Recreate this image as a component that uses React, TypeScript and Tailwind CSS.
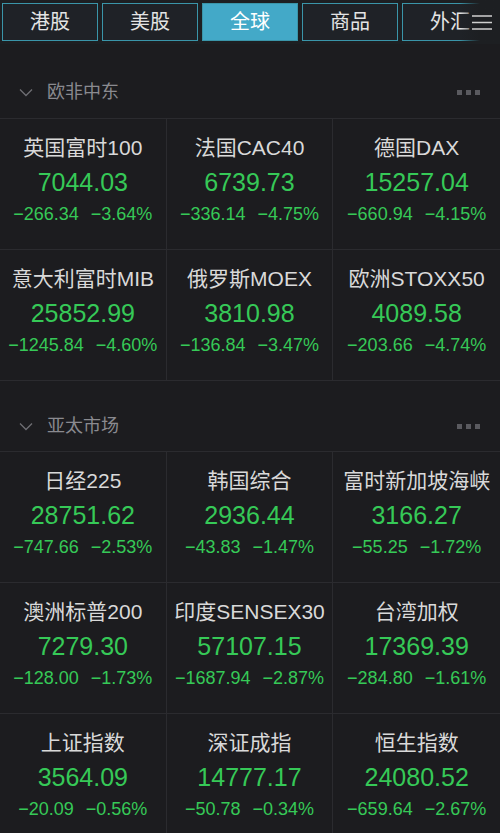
import React from "react";

type Quote = { name: string; price: string; change: string; pct: string };

const europe: Quote[] = [
  { name: "英国富时100", price: "7044.03", change: "−266.34", pct: "−3.64%" },
  { name: "法国CAC40", price: "6739.73", change: "−336.14", pct: "−4.75%" },
  { name: "德国DAX", price: "15257.04", change: "−660.94", pct: "−4.15%" },
  { name: "意大利富时MIB", price: "25852.99", change: "−1245.84", pct: "−4.60%" },
  { name: "俄罗斯MOEX", price: "3810.98", change: "−136.84", pct: "−3.47%" },
  { name: "欧洲STOXX50", price: "4089.58", change: "−203.66", pct: "−4.74%" },
];

const asia: Quote[] = [
  { name: "日经225", price: "28751.62", change: "−747.66", pct: "−2.53%" },
  { name: "韩国综合", price: "2936.44", change: "−43.83", pct: "−1.47%" },
  { name: "富时新加坡海峡", price: "3166.27", change: "−55.25", pct: "−1.72%" },
  { name: "澳洲标普200", price: "7279.30", change: "−128.00", pct: "−1.73%" },
  { name: "印度SENSEX30", price: "57107.15", change: "−1687.94", pct: "−2.87%" },
  { name: "台湾加权", price: "17369.39", change: "−284.80", pct: "−1.61%" },
  { name: "上证指数", price: "3564.09", change: "−20.09", pct: "−0.56%" },
  { name: "深证成指", price: "14777.17", change: "−50.78", pct: "−0.34%" },
  { name: "恒生指数", price: "24080.52", change: "−659.64", pct: "−2.67%" },
];

const tabs = ["港股", "美股", "全球", "商品", "外汇"];

const font = { fontFamily: '"Liberation Sans", "Noto Sans CJK SC", sans-serif' };

const SectionHeader = ({ title, top }: { title: string; top: string }) => (
  <div className={`flex items-center justify-between px-[19px] ${top}`}>
    <div className="flex items-center gap-[14px]">
      <svg width="14" height="9" viewBox="0 0 14 9" fill="none">
        <path d="M1 1.5 L7 7.5 L13 1.5" stroke="#6e6e73" strokeWidth="1.3" />
      </svg>
      <span className="text-[18px] leading-[26px] text-[#8a8a8f]">{title}</span>
    </div>
    <div className="flex gap-[4px] pr-[1px]">
      <span className="w-[5px] h-[5px] bg-[#5a5a5f]" />
      <span className="w-[5px] h-[5px] bg-[#5a5a5f]" />
      <span className="w-[5px] h-[5px] bg-[#5a5a5f]" />
    </div>
  </div>
);

const Cell = ({ q }: { q: Quote }) => (
  <div className="h-[131px] border-b border-r border-[#2b2b2f] flex flex-col items-center pt-[17px] [&:nth-child(3n)]:border-r-0">
    <div className="text-[21px] leading-[24px] text-[#d9d9d9] whitespace-nowrap">{q.name}</div>
    <div className="mt-[7px] text-[25px] leading-[30px] text-[#36c957]">{q.price}</div>
    <div className="mt-[6px] flex gap-[12px] text-[18px] leading-[22px] text-[#36c957] whitespace-nowrap">
      <span>{q.change}</span>
      <span>{q.pct}</span>
    </div>
  </div>
);

const App = () => {
  return (
    <div className="w-[500px] h-[833px] overflow-hidden bg-[#1c1c1f]" style={font}>
      <div className="relative h-[44px] flex overflow-hidden bg-[#1d1f22]">
        {tabs.map((t, i) => (
          <div
            key={t}
            className={`shrink-0 w-[96px] h-[38px] mt-[3px] mx-[2px] flex items-center justify-center border-[1.5px] border-[#3a95a9] text-[20px] ${
              i === 2 ? "bg-[#43a9c8] text-white" : "bg-[#1f2227] text-[#e4e4e4]"
            }`}
          >
            {t}
          </div>
        ))}
        <div className="absolute right-0 top-0 h-[44px] w-[40px] flex items-center justify-end pr-[8px] bg-gradient-to-r from-transparent from-0% to-[#1d1f22] to-50%">
          <svg width="20" height="15" viewBox="0 0 20 15" fill="none">
            <path d="M0 1 H20 M0 7.5 H20 M0 14 H20" stroke="#cfcfcf" strokeWidth="1.4" />
          </svg>
        </div>
      </div>

      <SectionHeader title="欧非中东" top="h-[74px] pt-[22px]" />
      <div className="grid grid-cols-3 border-t border-[#2b2b2f]">
        {europe.map((q) => (
          <Cell key={q.name} q={q} />
        ))}
      </div>

      <SectionHeader title="亚太市场" top="h-[70px] pt-[20px]" />
      <div className="grid grid-cols-3 border-t border-[#2b2b2f]">
        {asia.map((q) => (
          <Cell key={q.name} q={q} />
        ))}
      </div>
    </div>
  );
};

export default App;
